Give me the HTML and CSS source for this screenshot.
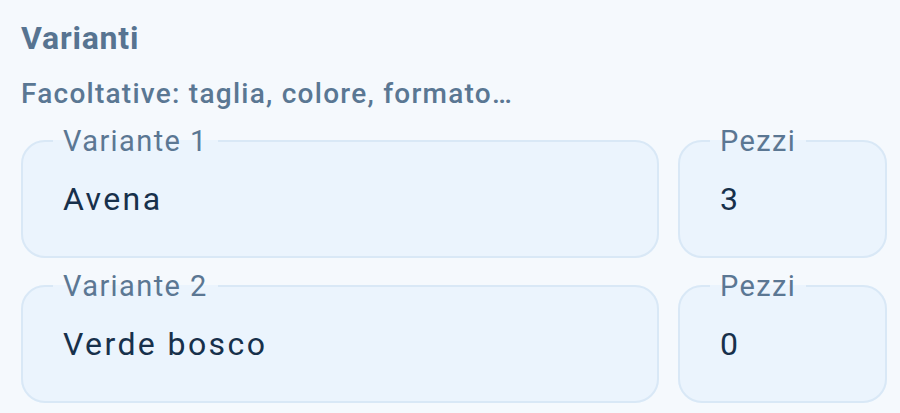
FILE: index.html
```html
<!DOCTYPE html>
<html lang="it">
<head>
<meta charset="utf-8">
<title>Varianti</title>
<link rel="stylesheet" href="styles.css">
</head>
<body>
<section class="panel">
  <h2 class="title">Varianti</h2>
  <p class="hint">Facoltative: taglia, colore, formato…</p>
  <div class="rows">
    <div class="row">
      <fieldset class="field"><legend>Variante 1</legend><div class="value">Avena</div></fieldset>
      <fieldset class="field"><legend>Pezzi</legend><div class="value">3</div></fieldset>
    </div>
    <div class="row">
      <fieldset class="field"><legend>Variante 2</legend><div class="value">Verde bosco</div></fieldset>
      <fieldset class="field"><legend>Pezzi</legend><div class="value">0</div></fieldset>
    </div>
  </div>
</section>
</body>
</html>
```
FILE: styles.css
```css
html, body {
  margin: 0;
  padding: 0;
  background: #f5f9fd;
}
body {
  font-family: Roboto, "Noto Sans", sans-serif;
  width: 900px;
  height: 413px;
  overflow: hidden;
}
.panel {
  padding: 0 13px 0 21px;
}
.title {
  margin: 0;
  padding-top: 19px;
  font-size: 32px;
  line-height: 38px;
  font-weight: 700;
  letter-spacing: 0.8px;
  color: #577491;
}
.hint {
  margin: 0;
  padding-top: 20px;
  font-size: 28px;
  line-height: 34px;
  font-weight: 500;
  letter-spacing: 1.25px;
  color: #5a7793;
}
.rows {
  display: flex;
  flex-direction: column;
  gap: 13px;
  padding-top: 15px;
}
.row {
  display: grid;
  grid-template-columns: 1fr 209px;
  gap: 19px;
}
.field {
  margin: 0;
  padding: 0;
  min-width: 0;
  border: 2px solid #d9e8f6;
  border-radius: 24px;
  background: #ebf4fd;
}
.field legend {
  margin-left: 30px;
  padding: 0 10px;
  font-size: 29px;
  line-height: 30px;
  letter-spacing: 1.4px;
  color: #5b7793;
}
.value {
  padding: 24px 0 38px 40px;
  font-size: 32px;
  line-height: 38px;
  letter-spacing: 2.4px;
  color: #17304b;
}
```
